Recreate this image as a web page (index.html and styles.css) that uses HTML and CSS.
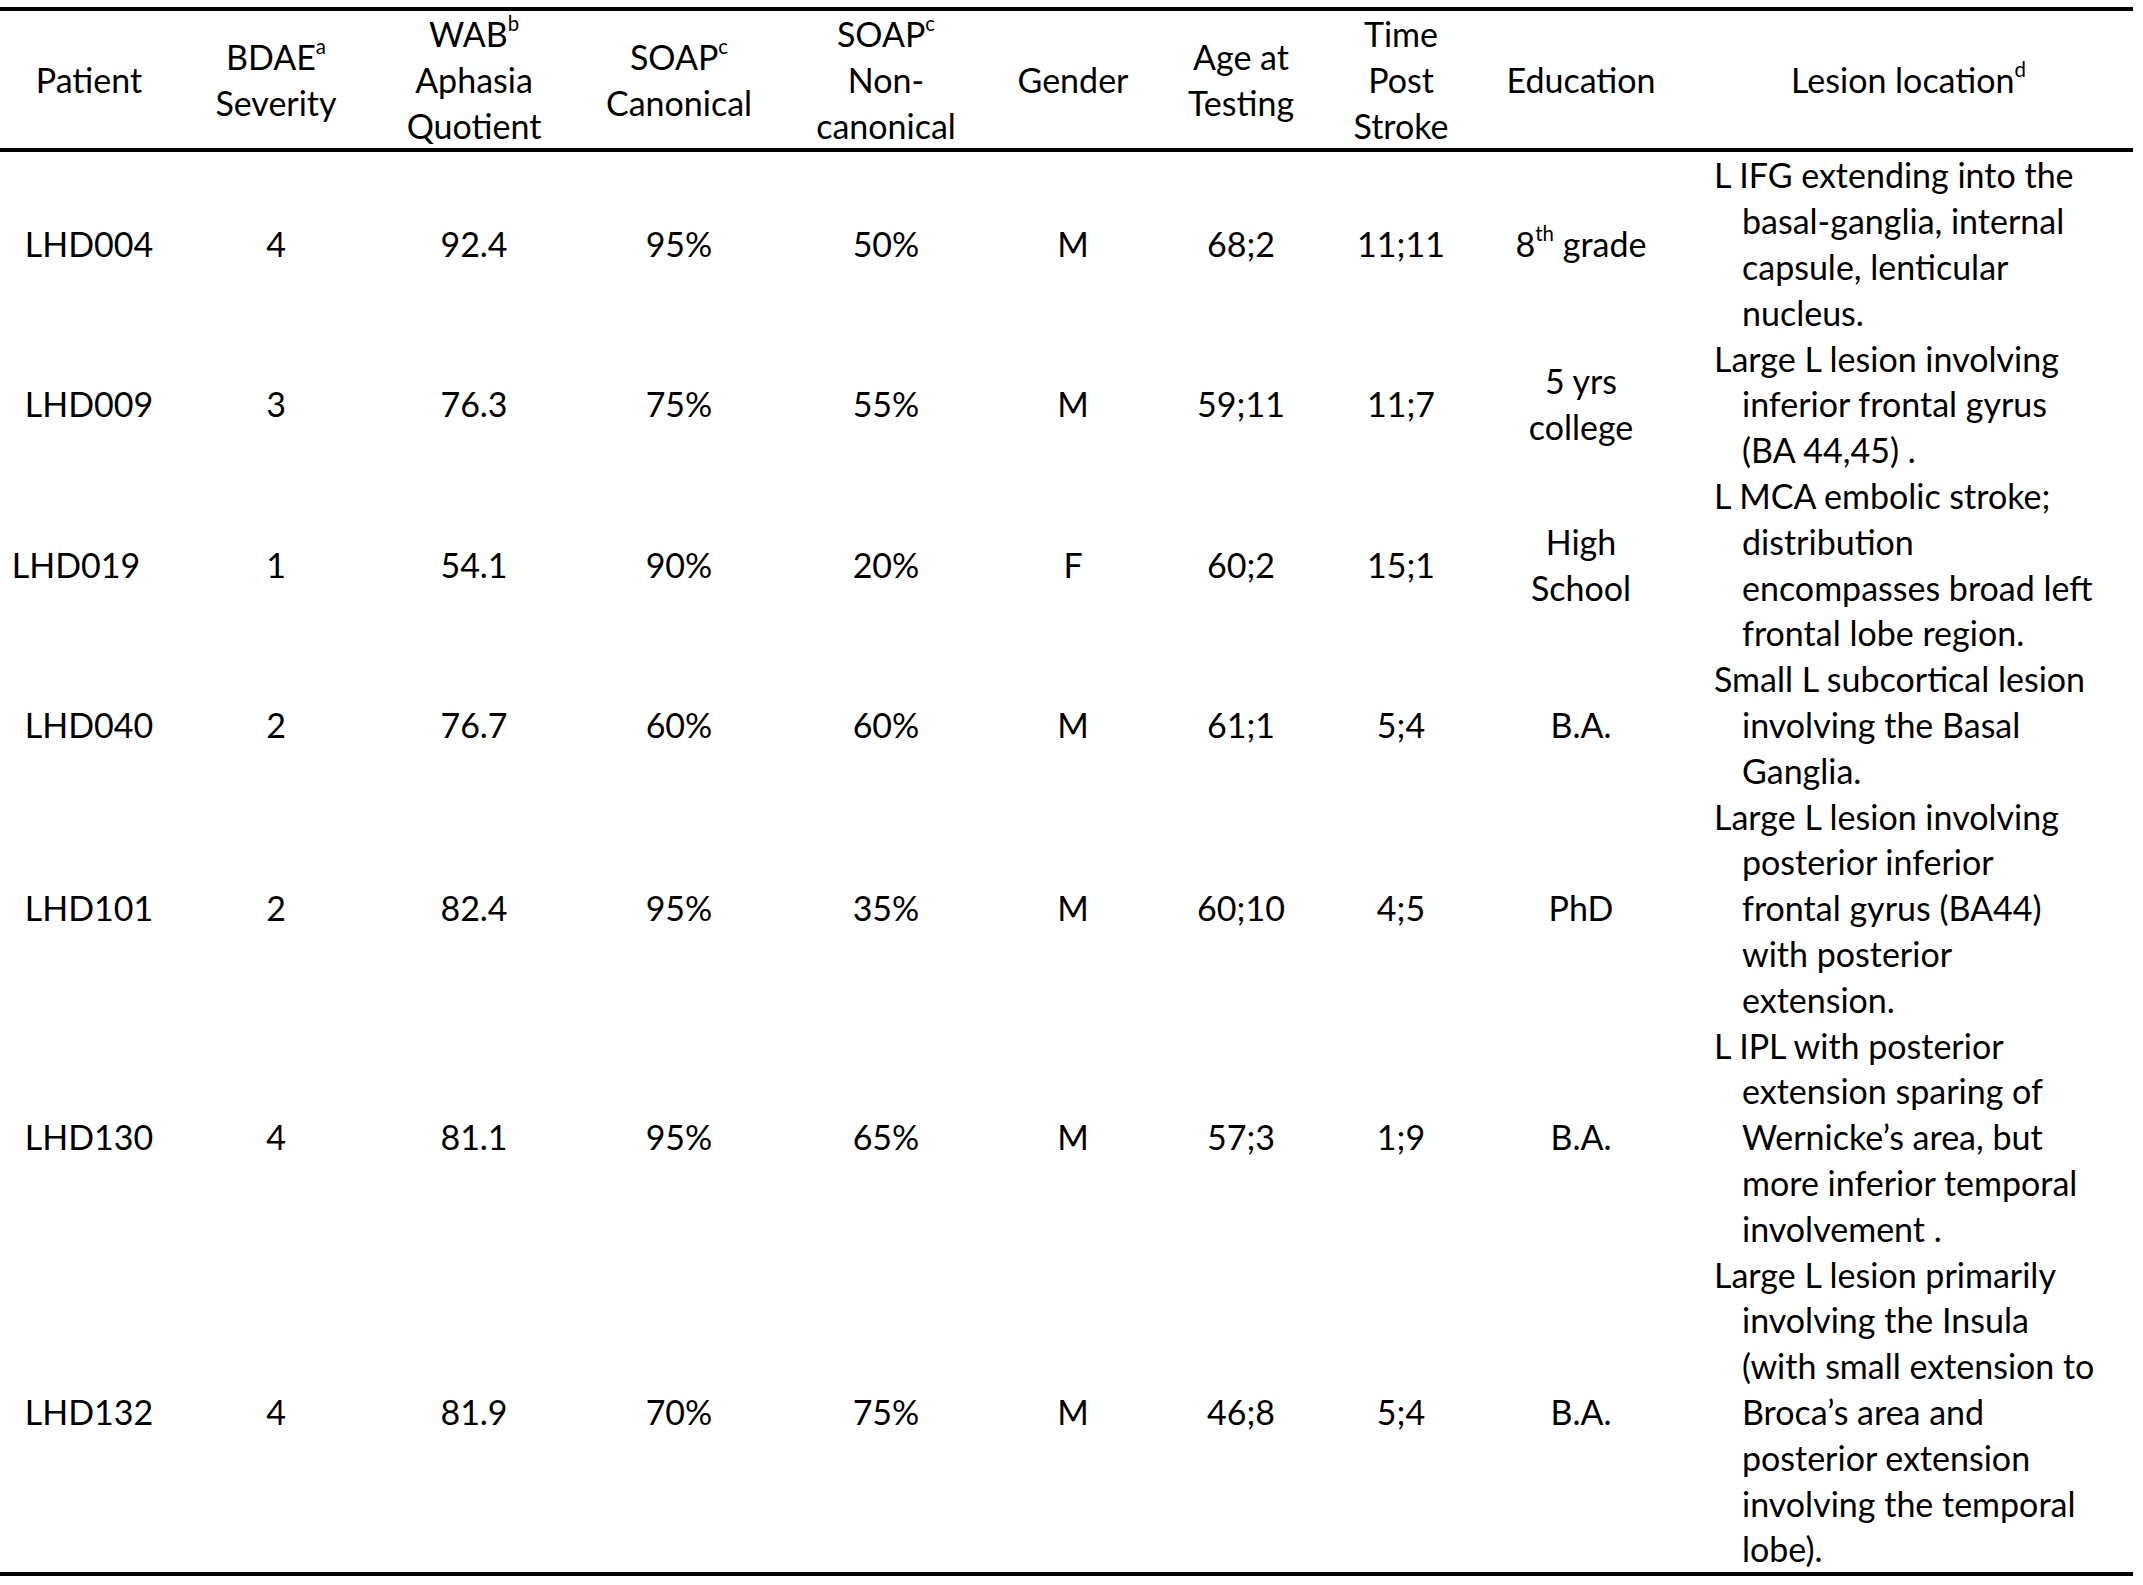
FILE: index.html
```html
<!DOCTYPE html>
<html lang="en">
<head>
    <meta charset="UTF-8">
    <title>Patient characteristics</title>
    <link rel="stylesheet" href="styles.css">
</head>
<body>
<table class="patients">
    <colgroup>
        <col class="c-patient">
        <col class="c-bdae">
        <col class="c-wab">
        <col class="c-canon">
        <col class="c-noncanon">
        <col class="c-gender">
        <col class="c-age">
        <col class="c-time">
        <col class="c-edu">
        <col class="c-lesion">
    </colgroup>
    <thead>
        <tr>
            <th>Patient</th>
            <th>BDAE<sup>a</sup><br>Severity</th>
            <th>WAB<sup>b</sup><br>Aphasia<br>Quotient</th>
            <th>SOAP<sup>c</sup><br>Canonical</th>
            <th>SOAP<sup>c</sup><br>Non-<br>canonical</th>
            <th>Gender</th>
            <th>Age at<br>Testing</th>
            <th>Time<br>Post<br>Stroke</th>
            <th>Education</th>
            <th class="lesion-head">Lesion location<sup>d</sup></th>
        </tr>
    </thead>
    <tbody>
        <tr>
            <td>LHD004</td>
            <td>4</td>
            <td>92.4</td>
            <td>95%</td>
            <td>50%</td>
            <td>M</td>
            <td>68;2</td>
            <td>11;11</td>
            <td>8<sup>th</sup> grade</td>
            <td class="lesion">L IFG extending into the<br>basal-ganglia, internal<br>capsule, lenticular<br>nucleus.</td>
        </tr>
        <tr>
            <td>LHD009</td>
            <td>3</td>
            <td>76.3</td>
            <td>75%</td>
            <td>55%</td>
            <td>M</td>
            <td>59;11</td>
            <td>11;7</td>
            <td>5 yrs<br>college</td>
            <td class="lesion">Large L lesion involving<br>inferior frontal gyrus<br>(BA 44,45) .</td>
        </tr>
        <tr>
            <td class="off-left">LHD019</td>
            <td>1</td>
            <td>54.1</td>
            <td>90%</td>
            <td>20%</td>
            <td>F</td>
            <td>60;2</td>
            <td>15;1</td>
            <td>High<br>School</td>
            <td class="lesion">L MCA embolic stroke;<br>distribution<br>encompasses broad left<br>frontal lobe region.</td>
        </tr>
        <tr>
            <td>LHD040</td>
            <td>2</td>
            <td>76.7</td>
            <td>60%</td>
            <td>60%</td>
            <td>M</td>
            <td>61;1</td>
            <td>5;4</td>
            <td>B.A.</td>
            <td class="lesion">Small L subcortical lesion<br>involving the Basal<br>Ganglia.</td>
        </tr>
        <tr>
            <td>LHD101</td>
            <td>2</td>
            <td>82.4</td>
            <td>95%</td>
            <td>35%</td>
            <td>M</td>
            <td>60;10</td>
            <td>4;5</td>
            <td>PhD</td>
            <td class="lesion">Large L lesion involving<br>posterior inferior<br>frontal gyrus (BA44)<br>with posterior<br>extension.</td>
        </tr>
        <tr>
            <td>LHD130</td>
            <td>4</td>
            <td>81.1</td>
            <td>95%</td>
            <td>65%</td>
            <td>M</td>
            <td>57;3</td>
            <td>1;9</td>
            <td>B.A.</td>
            <td class="lesion">L IPL with posterior<br>extension sparing of<br>Wernicke’s area, but<br>more inferior temporal<br>involvement .</td>
        </tr>
        <tr>
            <td>LHD132</td>
            <td>4</td>
            <td>81.9</td>
            <td>70%</td>
            <td>75%</td>
            <td>M</td>
            <td>46;8</td>
            <td>5;4</td>
            <td>B.A.</td>
            <td class="lesion">Large L lesion primarily<br>involving the Insula<br>(with small extension to<br>Broca’s area and<br>posterior extension<br>involving the temporal<br>lobe).</td>
        </tr>
    </tbody>
</table>
</body>
</html>
```

FILE: styles.css
```css
* { margin: 0; padding: 0; box-sizing: border-box; }
body { background: #fff; color: #000; font-family: Lato, "Liberation Sans", sans-serif; padding-top: 7px; }

.patients { width: 2133px; table-layout: fixed; border-collapse: collapse; border-top: 4px solid #000; border-bottom: 4px solid #000; font-size: 34px; line-height: 45.8px; }
.patients thead tr { border-bottom: 4px solid #000; }
.patients th, .patients td { padding: 0; text-align: center; vertical-align: middle; font-weight: normal; white-space: nowrap; }

.c-patient { width: 178px; }
.c-bdae { width: 196px; }
.c-wab { width: 200px; }
.c-canon { width: 210px; }
.c-noncanon { width: 204px; }
.c-gender { width: 170px; }
.c-age { width: 166px; }
.c-time { width: 154px; }
.c-edu { width: 206px; }
.c-lesion { width: 449px; }

sup { font-size: 0.6em; line-height: 0; vertical-align: 0.8em; }

.lesion { text-align: left !important; padding-left: 58px !important; text-indent: -28px; }
.lesion-head { padding-left: 0; }
.off-left { padding-right: 26px !important; }
```
